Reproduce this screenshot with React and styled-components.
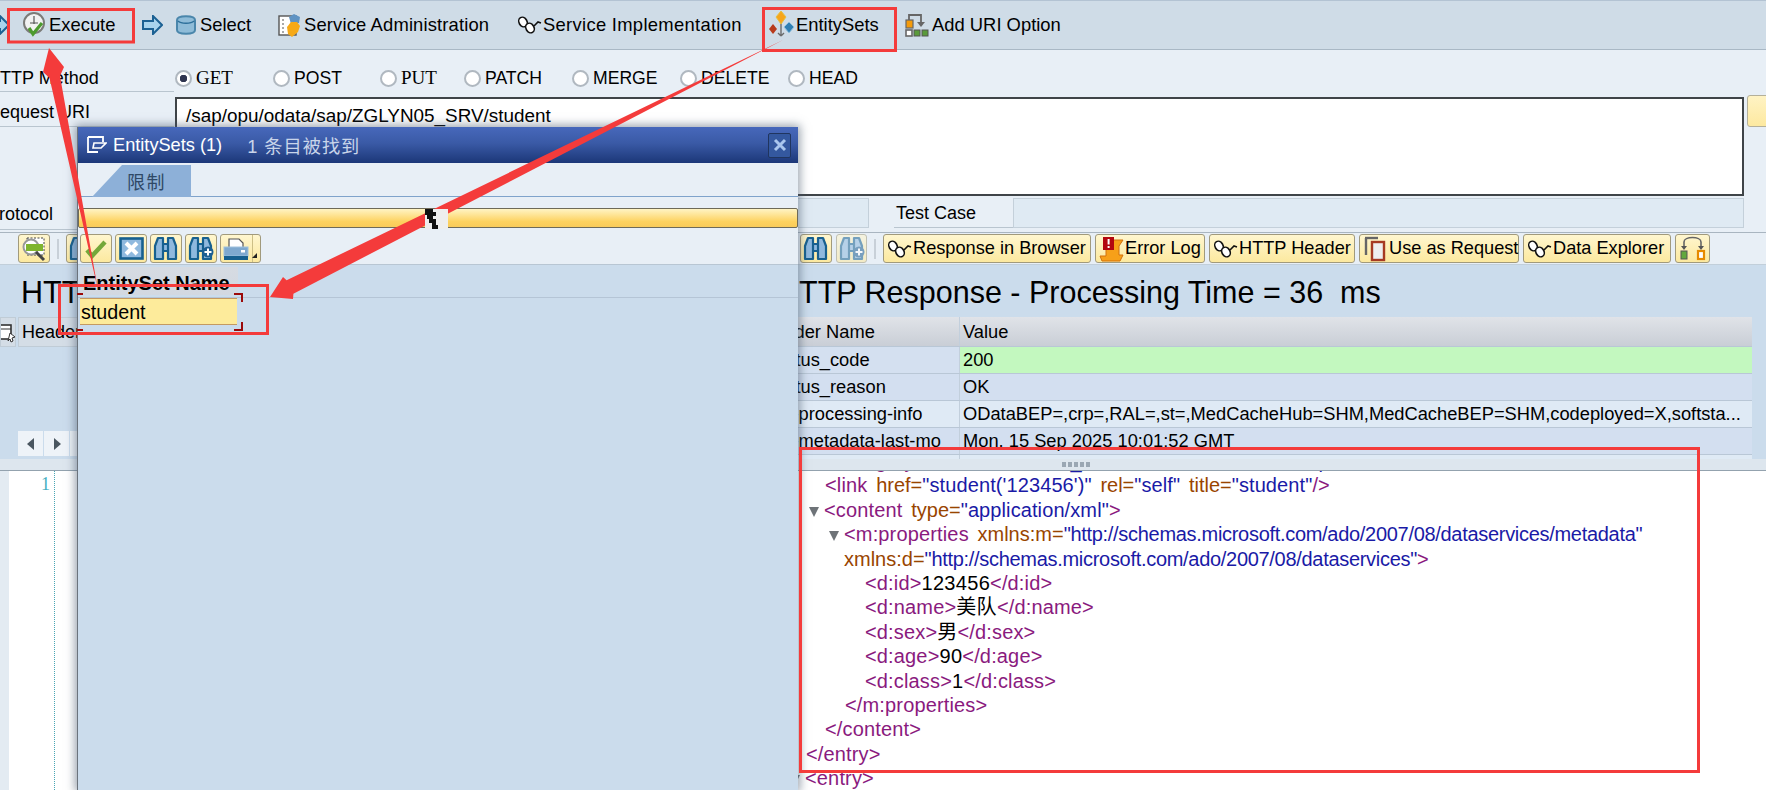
import React from 'react';
import styled, { createGlobalStyle } from 'styled-components';

const Global = createGlobalStyle`
  html, body { margin: 0; padding: 0; background: #e8eff6; }
  body { font-family: "Liberation Sans", Arial, sans-serif; color: #000; }
`;

const Page = styled.div`
  position: relative;
  width: 1766px;
  height: 790px;
  overflow: hidden;
  display: flex;
  flex-direction: column;
  background: #e8eff6;
`;

/* ---------- top toolbar ---------- */
const TopBar = styled.div`
  height: 48px;
  flex: none;
  display: flex;
  align-items: center;
  background: #cfdce7;
  border-top: 1px solid #b3c3d3;
  border-bottom: 1px solid #a9b8c5;
  margin-left: -11px;
`;
const TopItem = styled.div`
  width: ${p => p.$w}px;
  flex: none;
  display: flex;
  align-items: center;
  gap: ${p => p.$gap ?? 2}px;
  font-size: 18.4px;
  letter-spacing: ${p => p.$ls ?? 0}px;
  white-space: nowrap;
`;

/* ---------- form ---------- */
const Form = styled.div`
  flex: none;
  height: 182px;
  display: flex;
  flex-direction: column;
`;
const FormRow = styled.div`
  display: flex;
  height: ${p => p.$h}px;
  flex: none;
`;
const Label = styled.div`
  width: 174px;
  height: ${p => p.$h}px;
  flex: none;
  box-sizing: border-box;
  padding-top: ${p => p.$pt ?? 0}px;
  display: flex;
  align-items: center;
  font-size: 18px;
  border-bottom: 1px solid #b9c5cf;
  white-space: nowrap;
  text-indent: -13px;
  margin-right: 1px;
  overflow: hidden;
`;
const Radios = styled.div`
  height: 40px;
  margin-top: 8px;
  display: flex;
  align-items: center;
`;
const RadioItem = styled.label`
  width: ${p => p.$w}px;
  flex: none;
  display: flex;
  align-items: center;
  gap: 4px;
  font-size: ${p => (p.$serif ? 19 : 17.6)}px;
  font-family: ${p => (p.$serif ? '"Liberation Serif", serif' : '"Liberation Sans", sans-serif')};
`;
const RadioDot = styled.span`
  width: 17px;
  height: 17px;
  flex: none;
  box-sizing: border-box;
  border-radius: 50%;
  border: 2px solid #b0b8c0;
  background: ${p => (p.$on ? 'radial-gradient(circle, #2f3550 0 3.5px, #fff 4px)' : '#fff')};
`;
const UriBox = styled.div`
  width: 1569px;
  height: 99px;
  box-sizing: border-box;
  flex: none;
  background: #fff;
  border: 2px solid #3f4448;
  padding: 6px 9px;
  font-size: 18.9px;
  line-height: 22px;
`;
const UriButton = styled.div`
  width: 40px;
  height: 32px;
  margin: -2px 0 0 3px;
  flex: none;
  box-sizing: border-box;
  background: linear-gradient(#fff3c4, #fde9a0);
  border: 1px solid #b4b09a;
  border-radius: 3px;
`;
const DisabledField = styled.div`
  width: ${p => p.$w}px;
  height: 30px;
  flex: none;
  box-sizing: border-box;
  background: #dfeaf3;
  border: 1px solid #c4d0da;
`;
const FieldLabel = styled.div`
  width: 119px;
  height: 30px;
  margin-left: 25px;
  box-sizing: border-box;
  padding-left: 2px;
  font-size: 18px;
  line-height: 30px;
  flex: none;
  border-bottom: 1px solid #b9c5cf;
`;

/* ---------- second toolbar ---------- */
const ActionBar = styled.div`
  flex: none;
  height: 33px;
  box-sizing: border-box;
  padding-top: 1px;
  display: flex;
  align-items: flex-start;
  background: #e8eff6;
  border-top: 1px solid #a9b5c0;
  border-bottom: 1px solid #c2cfda;
`;
const ActionGroup = styled.div`
  display: flex;
  align-items: center;
  gap: 4px;
  margin-left: ${p => p.$ml}px;
`;
const YellowBtn = styled.div`
  width: ${p => p.$w}px;
  height: 29px;
  flex: none;
  box-sizing: border-box;
  display: flex;
  align-items: center;
  justify-content: ${p => (p.$text ? 'flex-start' : 'center')};
  gap: 1px;
  padding-left: ${p => (p.$text ? 3 : 0)}px;
  background: linear-gradient(#fff6cf, #fce99f);
  border: 1px solid #a19a7c;
  border-radius: 3px;
  font-size: 18.2px;
  white-space: nowrap;
  opacity: ${p => (p.$off ? 0.55 : 1)};
`;
const Separator = styled.div`
  width: 2px;
  height: 20px;
  flex: none;
  margin: 0 3px;
  background: #c8d0d8;
`;

/* ---------- panes ---------- */
const Panes = styled.div`
  flex: none;
  height: 194px;
  display: grid;
  grid-template-columns: 768px 1fr;
  background: #cbdcec;
  overflow: hidden;
`;
const Pane = styled.div`
  display: flex;
  flex-direction: column;
  min-width: 0;
  height: 194px;
`;
const PaneTitle = styled.div`
  flex: none;
  height: 52px;
  padding-left: ${p => p.$pl}px;
  font-size: 30.5px;
  line-height: 54px;
  white-space: pre;
`;
const HeaderTabs = styled.div`
  display: flex;
  gap: 2px;
  height: 30px;
`;
const HeaderTab = styled.div`
  width: ${p => p.$w}px;
  box-sizing: border-box;
  padding-left: 3px;
  background: #d4dde6;
  border: 1px solid #c0ccd6;
  font-size: 18px;
  line-height: 28px;
  overflow: hidden;
  display: flex;
  align-items: center;
`;
const ClippedIcon = styled.span`
  margin-left: -13px;
  display: flex;
`;
const Pager = styled.div`
  margin-top: auto;
  margin-bottom: 3px;
  padding-left: 18px;
  display: flex;
  gap: 1px;
`;
const PagerBtn = styled.div`
  width: 25px;
  height: 25px;
  background: #eef3f8;
  display: flex;
  align-items: center;
  justify-content: center;
`;
const Table = styled.div`
  margin-right: 14px;
  display: flex;
  flex-direction: column;
  height: 142px;
  overflow: hidden;
`;
const Row = styled.div`
  flex: none;
  display: grid;
  grid-template-columns: 191px 1fr;
  height: ${p => p.$h ?? 27}px;
  line-height: ${p => (p.$h ?? 27) - 1}px;
  box-sizing: border-box;
  font-size: 18.3px;
  background: ${p => p.$bg};
  border-bottom: 1px solid #b9c7d6;
`;
const Cell = styled.div`
  padding-left: 3px;
  text-indent: ${p => p.$indent ?? 0}px;
  white-space: nowrap;
  overflow: hidden;
  background: ${p => p.$bg ?? 'transparent'};
  border-left: ${p => (p.$first ? 'none' : '1px solid #c2cfdc')};
`;
const Sash = styled.div`
  flex: none;
  height: 12px;
  display: flex;
  justify-content: center;
  box-sizing: border-box;
  padding: 3px 0 0 386px;
  gap: 2px;
  background: #dde6ee;
  border-bottom: 1px solid #93a2ae;
`;
const SashDot = styled.span`
  width: 4px;
  height: 5px;
  background: #9aa7b3;
`;
const Editor = styled.div`
  flex: 1;
  display: grid;
  grid-template-columns: 768px 1fr;
  background: #fff;
  overflow: hidden;
`;
const LeftStrip = styled.div`
  background: #e3ebf2;
  display: flex;
  padding-left: 9px;
`;
const LineNo = styled.div`
  width: 46px;
  border-right: 1px dotted #4aa6b4;
  text-align: right;
  box-sizing: border-box;
  padding: 1px 4px 0 0;
  color: #47aec0;
  font-family: "Liberation Serif", serif;
  font-size: 18px;
  line-height: 24px;
`;
const LeftEditor = styled.div`
  flex: 1;
  background: #fff;
  display: flex;
`;
const CodeView = styled.div`
  margin-top: -22px;
  font-size: 20px;
  word-spacing: 3px;
  line-height: 24.4px;
  white-space: nowrap;
`;
const CodeLine = styled.div`
  padding-left: ${p => p.$indent}px;
  height: 24.4px;
`;
const Fold = styled.span`
  display: inline-block;
  width: 0;
  height: 0;
  margin-left: -16px;
  margin-right: 5px;
  border-left: 5.5px solid transparent;
  border-right: 5.5px solid transparent;
  border-top: 10px solid #6e7378;
`;
const tokenColors = { t: '#8a1a7e', a: '#994500', v: '#1a1aa6', u: '#1a1aa6', x: '#000' };
const tokenSpacing = { t: 0.15, a: 0, v: 0.1, u: -0.3, x: 0.3 };
const Tok = styled.span`
  color: ${p => tokenColors[p.$k]};
  letter-spacing: ${p => tokenSpacing[p.$k]}px;
  font-family: "Liberation Sans", "Noto Sans CJK SC", sans-serif;
`;

/* ---------- value help dialog ---------- */
const Dialog = styled.div`
  position: absolute;
  left: 77px;
  top: 127px;
  width: 721px;
  height: 663px;
  display: flex;
  flex-direction: column;
  background: #e8eff6;
  border-left: 1px solid #6b737c;
  box-sizing: border-box;
  box-shadow: 0 0 9px 2px rgba(70, 85, 105, 0.55);
`;
const TitleBar = styled.div`
  flex: none;
  height: 36px;
  display: flex;
  align-items: center;
  padding-left: 8px;
  background: linear-gradient(#4768bb, #3a5aa6 45%, #1c3778);
  color: #fff;
  font-size: 18.2px;
`;
const TitleCount = styled.span`
  margin-left: 25px;
  color: #c9d5ea;
  font-family: "Liberation Sans", "Noto Sans CJK SC", sans-serif;
  letter-spacing: 1px;
`;
const TitleText = styled.span`
  margin-left: 6px;
`;
const CloseBtn = styled.div`
  margin-left: auto;
  margin-right: 7px;
  width: 23px;
  height: 25px;
  box-sizing: border-box;
  border: 1px solid #20355f;
  border-radius: 2px;
  background: #34589f;
  display: flex;
  align-items: center;
  justify-content: center;
`;
const TabStrip = styled.div`
  flex: none;
  height: 34px;
  padding: 2px 0 0 14px;
  box-sizing: border-box;
  border-bottom: 1px solid #7fa3cb;
`;
const Tab = styled.div`
  width: 99px;
  height: 32px;
  box-sizing: border-box;
  padding-left: 35px;
  background: #8db0d8;
  clip-path: polygon(0 100%, 30px 0, 100% 0, 100% 100%);
  color: #2f4866;
  font-family: "Noto Sans CJK SC", sans-serif;
  font-size: 18px;
  letter-spacing: 1.5px;
  line-height: 32px;
`;
const Splitter = styled.div`
  flex: none;
  height: 20px;
  margin-top: 11px;
  box-sizing: border-box;
  background: linear-gradient(#fff4c4, #fdd25f 70%, #f9cb5a);
  border: 1px solid #6e6a58;
  border-radius: 2px;
`;
const DialogBar = styled.div`
  flex: none;
  height: 37px;
  padding: 6px 0 0 2px;
  box-sizing: border-box;
  display: flex;
  gap: 3px;
  border-bottom: 1px solid #b8c6d3;
`;
const PrintBtn = styled(YellowBtn)`
  justify-content: flex-start;
  padding-left: 2px;
  gap: 0;
`;
const DropZone = styled.span`
  margin-left: 3px;
  align-self: stretch;
  flex: 1;
  border-left: 1px solid #cdbf86;
  position: relative;
  &::after {
    content: '';
    position: absolute;
    right: 3px;
    bottom: 4px;
    border-left: 5px solid transparent;
    border-bottom: 5px solid #222;
  }
`;
const ListArea = styled.div`
  flex: 1;
  background: #cbdcec;
  padding: 2px 0 0 2px;
`;
const ListHead = styled.div`
  width: 158px;
  height: 28px;
  box-sizing: border-box;
  padding-left: 3px;
  background: linear-gradient(#d6dbe2, #d2d8e1);
  font-size: 20px;
  font-weight: bold;
  line-height: 32px;
  white-space: nowrap;
`;
const ListRule = styled.div`
  margin: 2px 0 0 -2px;
  height: 1px;
  background: #b5c5d6;
`;
const ListRow = styled.div`
  position: relative;
  width: 157px;
  height: 27px;
  box-sizing: border-box;
  padding-left: 1px;
  background: #fdeb9b;
  border-top: 1px solid #c49a62;
  border-bottom: 1px solid #c49a62;
  font-size: 19.7px;
  line-height: 26px;
`;
const Corners = styled.svg`
  position: absolute;
  left: -3px;
  top: -6px;
`;
const Annotations = styled.svg`
  position: absolute;
  left: 0;
  top: 0;
  z-index: 5;
  pointer-events: none;
`;

/* ---------- icons ---------- */
const Ic = ({ w = 24, h = 24, vb, children }) => (
  <svg width={w} height={h} viewBox={vb ?? `0 0 ${w} ${h}`} style={{ flex: 'none' }}>{children}</svg>
);
const BLUE = '#17608f';
const ClockCheck = () => (
  <Ic w={26} h={28}>
    <circle cx="12" cy="12" r="10" fill="#f2f2f2" stroke="#7b7b78" strokeWidth="2" />
    <path d="M12 5v8M8 12h8" stroke="#555" strokeWidth="1.2" />
    <path d="M7 17l4 6 9-11" fill="none" stroke="#4c9a2e" strokeWidth="3.2" />
  </Ic>
);
const BlueArrow = ({ w = 21 }) => (
  <Ic w={w} h={20} vb="0 0 21 20">
    <path d="M1 6h10V1l9 9-9 9v-5H1z" fill="#a8d4ee" stroke="#1c6193" strokeWidth="2" />
  </Ic>
);
const Barrel = () => (
  <Ic w={22} h={20}>
    <path d="M2 5c0-5 18-5 18 0v10c0 5-18 5-18 0z" fill="#8fbcd8" stroke="#4a86ab" strokeWidth="2" />
    <path d="M3 6c3 3 13 3 16 0" fill="none" stroke="#2c6f9a" strokeWidth="1.6" />
  </Ic>
);
const AdminIcon = () => (
  <Ic w={23} h={25}>
    <rect x="1" y="3" width="17" height="19" fill="#fff" stroke="#555" strokeWidth="1.4" />
    <path d="M5 6v14" stroke="#555" strokeDasharray="2 2" />
    <path d="M11 4l5-3 6 3-1 6-8 1z" fill="#5f93c3" />
    <path d="M9 14l4-5h6l3 4-2 6-6 5-4-3z" fill="#f6a917" />
  </Ic>
);
const ChainIcon = ({ w = 25 }) => (
  <Ic w={w} h={22} vb="0 0 25 22">
    <ellipse cx="6" cy="8" rx="4" ry="5" fill="#fff" stroke="#111" strokeWidth="1.6" transform="rotate(-30 6 8)" />
    <ellipse cx="13" cy="14" rx="4" ry="5" fill="#fff" stroke="#111" strokeWidth="1.6" transform="rotate(-30 13 14)" />
    <path d="M17 12l4-4 3 1" fill="none" stroke="#111" strokeWidth="1.6" />
  </Ic>
);
const EntityIcon = () => (
  <Ic w={27} h={30}>
    <path d="M13 10v16M13 26l-3-3M13 26l3-3" stroke="#6b6b6b" strokeWidth="1.4" fill="none" />
    <path d="M13 1l5 6-5 7-5-7z" fill="#f7a51a" stroke="#e6c040" />
    <path d="M5 14l4 5-4 5-4-5z" fill="#b83a1c" />
    <path d="M21 12l5 5-5 6-5-6z" fill="#2f7fb4" stroke="#8fc0dc" />
  </Ic>
);
const AddUriIcon = () => (
  <Ic w={25} h={24}>
    <path d="M4 8V2h12v8" fill="none" stroke="#666" strokeWidth="1.8" />
    <path d="M12 9h8l-4 5z" fill="#666" />
    <rect x="1" y="7" width="7" height="8" fill="#f59b0a" stroke="#666" strokeWidth="1.2" />
    <rect x="1" y="17" width="6" height="6" fill="#fff" stroke="#666" strokeWidth="1.6" />
    <rect x="9" y="17" width="6" height="6" fill="#5a9a3b" stroke="#555" />
    <rect x="17" y="17" width="6" height="6" fill="#5a9a3b" stroke="#555" />
  </Ic>
);
const Binocular = ({ plus }) => (
  <Ic w={26} h={25}>
    <path d="M5 2h5v21H2V10zM15 2h5l3 8v13h-8zM10 8h5v7h-5z" fill="#8fb9de" stroke={BLUE} strokeWidth="2.2" strokeLinejoin="round" />
    {plus && <circle cx="20" cy="16" r="5.5" fill="#1d5f92" />}
    {plus && <path d="M20 12.5v7M16.5 16h7" stroke="#fff" strokeWidth="2" />}
  </Ic>
);
const FindIcon = () => (
  <Ic w={26} h={26}>
    <rect x="6" y="2" width="17" height="17" fill="#fff" stroke="#444" strokeDasharray="2 1.5" />
    <circle cx="10" cy="11" r="7.5" fill="#fff" stroke="#999" strokeWidth="2" />
    <rect x="5" y="8" width="17" height="7" fill="#7fb52e" />
    <path d="M15 16l8 8" stroke="#444" strokeWidth="3" />
  </Ic>
);
const CheckIcon = () => (
  <Ic w={24} h={20}>
    <path d="M3 11l5 6L21 3" fill="none" stroke="#74a83a" strokeWidth="4.4" />
  </Ic>
);
const CancelIcon = () => (
  <Ic w={25} h={23}>
    <rect x="1.5" y="1.5" width="22" height="20" fill="#8fb9de" stroke={BLUE} strokeWidth="2.6" />
    <path d="M7 6l11 11M18 6L7 17" stroke="#fff" strokeWidth="4" />
  </Ic>
);
const PrinterIcon = () => (
  <Ic w={26} h={24}>
    <path d="M6 2h10l4 4v5H6z" fill="#fff" stroke="#555" strokeWidth="1.2" />
    <rect x="1" y="10" width="24" height="9" fill="#7fa9cf" stroke="#9fc2de" />
    <rect x="18" y="13" width="4" height="2.5" fill="#fff" />
    <rect x="1" y="19" width="24" height="4" fill={BLUE} />
  </Ic>
);
const PageBack = () => (
  <Ic w={25} h={26}>
    <path d="M3 2v17" stroke="#666" strokeWidth="2.4" fill="none" />
    <path d="M2 2h13" stroke="#666" strokeWidth="2.4" />
    <rect x="9" y="6" width="12" height="18" fill="#eee" stroke="#a63a22" strokeWidth="2.4" />
  </Ic>
);
const ErrorScroll = () => (
  <Ic w={25} h={26}>
    <path d="M7 4h17l-4 6v9h4l-3 6H3l-2-5h6z" fill="#f7a019" stroke="#d2700c" />
    <rect x="4" y="1" width="11" height="13" fill="#b3060f" />
    <rect x="8.6" y="3" width="2" height="5.5" fill="#fff" />
    <rect x="8.6" y="10" width="2" height="2" fill="#fff" />
  </Ic>
);
const ConnectIcon = () => (
  <Ic w={27} h={26}>
    <path d="M5 10V6c0-6 17-6 17 0v4" fill="none" stroke="#666" strokeWidth="1.6" />
    <path d="M2 10h6l-3 4zM19 10h6l-3 4z" fill="#555" />
    <rect x="2" y="15" width="6" height="8" fill="#62a83d" stroke="#555" />
    <rect x="19" y="15" width="6" height="8" fill="#fff" stroke="#e68a00" strokeWidth="2.2" />
  </Ic>
);
const DocIcon = () => (
  <Ic w={21} h={20}>
    <path d="M2 2h15v5M2 2v15h10" fill="none" stroke="#fff" strokeWidth="1.8" />
    <path d="M8 8h12l-5 5H7z" fill="none" stroke="#fff" strokeWidth="1.6" />
  </Ic>
);
const TableConfigIcon = () => (
  <Ic w={26} h={24}>
    <rect x="2" y="5" width="18" height="14" fill="#fff" stroke="#333" strokeWidth="1.6" />
    <path d="M2 9h18M9 9v10" stroke="#333" />
    <path d="M19 13l5 4-3 1 1 3-2 1-1-3-2 2z" fill="#fff" stroke="#333" />
  </Ic>
);

const codeLines = [
  { i: 57, p: [['t', '<category '], ['a', 'term='], ['v', '"ZGLYN05_SRV.student" '], ['a', 'scheme='], ['u', '"http://schemas.microsoft.com/ado/2007/08/dataservices/scheme"'], ['t', '/>']] },
  { i: 57, p: [['t', '<link '], ['a', 'href='], ['v', '"student(\'123456\')" '], ['a', 'rel='], ['v', '"self" '], ['a', 'title='], ['v', '"student"'], ['t', '/>']] },
  { i: 57, fold: true, p: [['t', '<content '], ['a', 'type='], ['v', '"application/xml"'], ['t', '>']] },
  { i: 77, fold: true, p: [['t', '<m:properties '], ['a', 'xmlns:m='], ['u', '"http://schemas.microsoft.com/ado/2007/08/dataservices/metadata"']] },
  { i: 76, p: [['a', 'xmlns:d='], ['u', '"http://schemas.microsoft.com/ado/2007/08/dataservices"'], ['t', '>']] },
  { i: 97, p: [['t', '<d:id>'], ['x', '123456'], ['t', '</d:id>']] },
  { i: 97, p: [['t', '<d:name>'], ['x', '美队'], ['t', '</d:name>']] },
  { i: 97, p: [['t', '<d:sex>'], ['x', '男'], ['t', '</d:sex>']] },
  { i: 97, p: [['t', '<d:age>'], ['x', '90'], ['t', '</d:age>']] },
  { i: 97, p: [['t', '<d:class>'], ['x', '1'], ['t', '</d:class>']] },
  { i: 77, p: [['t', '</m:properties>']] },
  { i: 57, p: [['t', '</content>']] },
  { i: 38, p: [['t', '</entry>']] },
  { i: 38, fold: true, p: [['t', '<entry>']] },
];

const headerRows = [
  { name: 'status_code', value: '200', bg: '#d4e0f0', valueBg: '#c3f8bf' },
  { name: 'status_reason', value: 'OK', bg: '#d3dff0' },
  { name: 'sap-processing-info', value: 'ODataBEP=,crp=,RAL=,st=,MedCacheHub=SHM,MedCacheBEP=SHM,codeployed=X,softsta...', bg: '#dfeaf5', indent: -8 },
  { name: 'sap-metadata-last-mo', value: 'Mon, 15 Sep 2025 10:01:52 GMT', bg: '#d3dff0', indent: -8 },
  { name: '', value: '', bg: '#dfeaf5' },
];

export default function App() {
  return (
    <Page>
      <Global />
      <TopBar>
        <TopItem $w={33}><BlueArrow /></TopItem>
        <TopItem $w={120} $gap={1}><ClockCheck />Execute</TopItem>
        <TopItem $w={33}><BlueArrow /></TopItem>
        <TopItem $w={103} $gap={3}><Barrel />Select</TopItem>
        <TopItem $w={239} $gap={3} $ls={0.15}><AdminIcon />Service Administration</TopItem>
        <TopItem $w={251} $gap={1} $ls={0.3}><ChainIcon />Service Implementation</TopItem>
        <TopItem $w={137} $gap={1}><EntityIcon />EntitySets</TopItem>
        <TopItem $w={200}><AddUriIcon />Add URI Option</TopItem>
      </TopBar>

      <Form>
        <FormRow $h={47}>
          <Label $h={42} $pt={15}>HTTP Method</Label>
          <Radios>
            <RadioItem $w={98} $serif><RadioDot $on />GET</RadioItem>
            <RadioItem $w={107}><RadioDot />POST</RadioItem>
            <RadioItem $w={84} $serif><RadioDot />PUT</RadioItem>
            <RadioItem $w={108}><RadioDot />PATCH</RadioItem>
            <RadioItem $w={108}><RadioDot />MERGE</RadioItem>
            <RadioItem $w={108}><RadioDot />DELETE</RadioItem>
            <RadioItem $w={90}><RadioDot />HEAD</RadioItem>
          </Radios>
        </FormRow>
        <FormRow $h={101}>
          <Label $h={30} $pt={1}>Request URI</Label>
          <UriBox>/sap/opu/odata/sap/ZGLYN05_SRV/student</UriBox>
          <UriButton />
        </FormRow>
        <FormRow $h={34}>
          <Label $h={32} $pt={2}>Protocol</Label>
          <DisabledField $w={694} />
          <FieldLabel>Test Case</FieldLabel>
          <DisabledField $w={731} />
        </FormRow>
      </Form>

      <ActionBar>
        <ActionGroup $ml={18}>
          <YellowBtn $w={32}><FindIcon /></YellowBtn>
          <Separator />
          <YellowBtn $w={32}><Binocular /></YellowBtn>
        </ActionGroup>
        <ActionGroup $ml={702}>
          <YellowBtn $w={32}><Binocular /></YellowBtn>
          <YellowBtn $w={31} $off><Binocular plus /></YellowBtn>
          <Separator />
          <YellowBtn $w={208} $text><ChainIcon />Response in Browser</YellowBtn>
          <YellowBtn $w={110} $text><ErrorScroll />Error Log</YellowBtn>
          <YellowBtn $w={146} $text><ChainIcon />HTTP Header</YellowBtn>
          <YellowBtn $w={160} $text><PageBack />Use as Request</YellowBtn>
          <YellowBtn $w={148} $text><ChainIcon />Data Explorer</YellowBtn>
          <YellowBtn $w={35}><ConnectIcon /></YellowBtn>
        </ActionGroup>
      </ActionBar>

      <Panes>
        <Pane>
          <PaneTitle $pl={21}>HTTP Request</PaneTitle>
          <HeaderTabs>
            <HeaderTab $w={16}><ClippedIcon><TableConfigIcon /></ClippedIcon></HeaderTab>
            <HeaderTab $w={120}>Header</HeaderTab>
          </HeaderTabs>
          <Pager>
            <PagerBtn>
              <Ic w={10} h={12}><path d="M8 0v12L1 6z" fill="#4a5660" /></Ic>
            </PagerBtn>
            <PagerBtn>
              <Ic w={10} h={12}><path d="M2 0v12l7-6z" fill="#4a5660" /></Ic>
            </PagerBtn>
            <PagerBtn />
          </Pager>
        </Pane>
        <Pane>
          <PaneTitle $pl={9}>{'HTTP Response - Processing Time = 36  ms'}</PaneTitle>
          <Table>
            <Row $h={30} $bg="linear-gradient(#e0e3e8, #c9ced6)">
              <Cell $first $indent={-10}>Header Name</Cell>
              <Cell>Value</Cell>
            </Row>
            {headerRows.map((r, i) => (
              <Row key={i} $bg={r.bg}>
                <Cell $first $indent={r.indent}>{r.name}</Cell>
                <Cell $bg={r.valueBg}>{r.value}</Cell>
              </Row>
            ))}
          </Table>
        </Pane>
      </Panes>

      <Sash>
        {[0, 1, 2, 3, 4].map(i => <SashDot key={i} />)}
      </Sash>

      <Editor>
        <LeftStrip>
          <LeftEditor>
            <LineNo>1</LineNo>
          </LeftEditor>
        </LeftStrip>
        <CodeView>
          {codeLines.map((line, i) => (
            <CodeLine key={i} $indent={line.i}>
              {line.fold && <Fold />}
              {line.p.map(([k, text], j) => <Tok key={j} $k={k}>{text}</Tok>)}
            </CodeLine>
          ))}
        </CodeView>
      </Editor>

      <Dialog>
        <TitleBar>
          <DocIcon />
          <TitleText>EntitySets (1)</TitleText>
          <TitleCount>1 条目被找到</TitleCount>
          <CloseBtn>
            <Ic w={14} h={14}><path d="M2 2l10 10M12 2L2 12" stroke="#a9c6ee" strokeWidth="3" /></Ic>
          </CloseBtn>
        </TitleBar>
        <TabStrip><Tab>限制</Tab></TabStrip>
        <Splitter />
        <DialogBar>
          <YellowBtn $w={32}><CheckIcon /></YellowBtn>
          <YellowBtn $w={32}><CancelIcon /></YellowBtn>
          <YellowBtn $w={32}><Binocular /></YellowBtn>
          <YellowBtn $w={32}><Binocular plus /></YellowBtn>
          <PrintBtn $w={41}><PrinterIcon /><DropZone /></PrintBtn>
        </DialogBar>
        <ListArea>
          <ListHead>EntitySet Name</ListHead>
          <ListRule />
          <ListRow>
            student
            <Corners width="168" height="40" viewBox="0 0 168 40">
              <path d="M0 1h6M0 37h6M157 1h8v8M157 37h8v-8" fill="none" stroke="#9b0a0a" strokeWidth="2" />
            </Corners>
          </ListRow>
        </ListArea>
      </Dialog>

      <Annotations width="1766" height="790" viewBox="0 0 1766 790">
        <g fill="none" stroke="#f43b3b" strokeWidth="3">
          <rect x="8.5" y="9.5" width="125" height="32.5" />
          <rect x="763.5" y="8.5" width="132" height="42" />
          <rect x="59.5" y="285.5" width="208" height="48" />
          <rect x="800.5" y="448.5" width="898" height="323" />
        </g>
        <polygon points="49,48 64,67 60,76 98,290 49.5,78 43,72" fill="#f43b3b" />
        <polygon points="270,297 293,299 293.4,293.7 783,40 286.6,280.3 283,277" fill="#f43b3b" />
        <rect x="425" y="209" width="23" height="20" fill="#eeeeee" />
        <path d="M425 209h8v3h3v4h-3v3h3v6h2v4h-6v-6h-3v-4h-2v-4h-2z" fill="#111" />
      </Annotations>
    </Page>
  );
}
